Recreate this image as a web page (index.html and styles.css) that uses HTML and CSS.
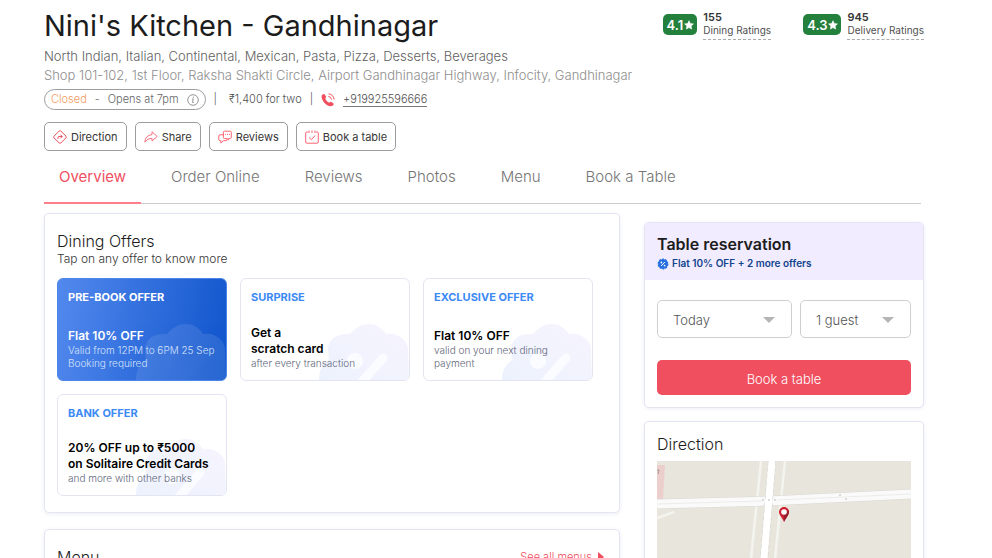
FILE: index.html
```html
<!DOCTYPE html>
<html lang="en">
<head>
<meta charset="utf-8">
<meta name="viewport" content="width=device-width, initial-scale=1">
<title>Nini's Kitchen - Gandhinagar</title>
<link rel="stylesheet" href="styles.css">
</head>
<body>
<svg class="defs" width="0" height="0" aria-hidden="true">
  <defs>
    <linearGradient id="pale" x1="0" y1="1" x2="1" y2="0">
      <stop offset="0" stop-color="#ecf2fd"/><stop offset="1" stop-color="#f7f4fe"/>
    </linearGradient>
    <symbol id="badge" viewBox="0 0 90 56">
      <path class="badge-shape" d="M0 56C0 48 2 42 10 36C9 33 10 30 9 25C10 14 18 9 31 10C37 3 43 0 50 0C57 0 62 3 67 10C79 8 88 16 89 24L90 56Z"/>
      <circle class="badge-mark" cx="36" cy="37" r="8"/>
      <path class="badge-line" d="M41 60L64 34"/>
    </symbol>
    <symbol id="star" viewBox="0 0 10 10"><path fill="#fff" stroke="#fff" stroke-width=".6" stroke-linejoin="round" d="M5 .7L6.3 3.5L9.4 3.9L7.1 6L7.7 9.1L5 7.6L2.3 9.1L2.9 6L.6 3.9L3.7 3.5Z"/></symbol>
  </defs>
</svg>
<div class="page">
  <header class="header">
    <div class="info">
      <h1>Nini's Kitchen - Gandhinagar</h1>
      <p class="cuisines">North Indian, Italian, Continental, Mexican, Pasta, Pizza, Desserts, Beverages</p>
      <p class="address">Shop 101-102, 1st Floor, Raksha Shakti Circle, Airport Gandhinagar Highway, Infocity, Gandhinagar</p>
    </div>
    <div class="ratings">
      <div class="rating">
        <span class="score">4.1<svg width="10" height="10"><use href="#star"/></svg></span>
        <div class="rating-text"><b>155</b><span>Dining Ratings</span></div>
      </div>
      <div class="rating">
        <span class="score">4.3<svg width="10" height="10"><use href="#star"/></svg></span>
        <div class="rating-text"><b>945</b><span>Delivery Ratings</span></div>
      </div>
    </div>
  </header>
  <div class="status-row">
    <span class="status"><span class="closed">Closed</span><span>-</span><span>Opens at 7pm</span>
      <svg width="12" height="12" viewBox="0 0 12 12" fill="none" stroke="#888"><circle cx="6" cy="6" r="5.3" stroke-width=".9"/><path d="M5.2 5.2L6.3 4.9L5.5 8.4Q5.5 8.9 6.8 8.3" stroke-width=".9"/><path d="M6.3 2.8V3.7" stroke-width="1.1"/></svg>
    </span>
    <span>|</span><span class="cost">₹1,400 for two</span><span>|</span>
    <svg class="phone" width="14" height="14" viewBox="0 0 14 14"><path fill="#ef4f5f" d="M1.3 1.8Q2.9.3 3.8 1.6L5 3.6Q5.4 4.5 4.4 5.2Q4.1 6.2 5.8 8Q7.6 9.9 8.7 9.5Q9.4 8.5 10.4 9L12.3 10.3Q13.3 11.2 11.8 12.5C9.5 14.5 5.7 12.3 3.5 9.9C1.2 7.4-.4 3.5 1.3 1.8Z"/><path fill="none" stroke="#ef4f5f" d="M7.3 3.3Q10.1 3.7 10.6 6.6M7.6.8Q12.5 1.5 13.1 6.5"/></svg>
    <a class="tel" href="tel:+919925596666">+919925596666</a>
  </div>
  <div class="actions">
    <button type="button"><svg width="14" height="14" viewBox="0 0 14 14" fill="none" stroke="#ef4f5f" stroke-linejoin="round"><path d="M6.2 1Q7 .3 7.8 1L13 6.2Q13.7 7 13 7.8L7.8 13Q7 13.7 6.2 13L1 7.8Q.3 7 1 6.2Z"/><path d="M5 9V7.5Q5 6.5 6 6.5H9M7.5 4.7L9.3 6.5L7.5 8.3"/></svg>Direction</button>
    <button type="button"><svg width="14" height="14" viewBox="0 0 14 14" fill="none" stroke="#f4717f" stroke-linejoin="round"><path d="M8 1.8L13.2 6.5L8 11V8.3Q3.5 8 .9 12.2Q1 5.5 8 4.6Z"/></svg>Share</button>
    <button type="button"><svg width="14" height="14" viewBox="0 0 14 14" fill="none" stroke="#ff6474" stroke-linejoin="round"><path d="M6.4 1.2H12.2Q13.3 1.2 13.3 2.2V7.5Q13.3 8.5 12.2 8.5H10.5V10L8.8 8.5H6.4Q5.4 8.5 5.4 7.5V2.2Q5.4 1.2 6.4 1.2Z"/><path d="M5.4 4.8H2Q.8 4.8.8 6V9.6Q.8 10.7 2 10.7H2.8V13L5.2 10.7H8Q9 10.7 9 9.5V8.5M7 4.4H8M9 4.4H10M11 4.4H12"/></svg>Reviews</button>
    <button type="button"><svg width="14" height="14" viewBox="0 0 14 14" fill="none" stroke="#ff6474" stroke-linejoin="round"><path d="M3 2H1.7Q.7 2 .7 3V12Q.7 13.2 1.8 13.2H12.2Q13.3 13.2 13.3 12V3Q13.3 2 12.3 2H11M4 .5V3M7 .5V3M10 .5V3M4 7.5L6.4 9.7L10.2 5.4"/></svg>Book a table</button>
  </div>
  <nav class="tabs">
    <a class="active" href="#overview">Overview</a><a href="#order">Order Online</a><a href="#reviews">Reviews</a><a href="#photos">Photos</a><a href="#menu">Menu</a><a href="#book">Book a Table</a>
  </nav>
  <div class="columns">
    <main class="main">
      <section class="card offers" id="overview">
        <h2>Dining Offers</h2>
        <p class="hint">Tap on any offer to know more</p>
        <div class="offer-grid">
          <article class="offer prebook"><svg class="mark"><use href="#badge"/></svg><h3>PRE-BOOK OFFER</h3><div class="body"><strong>Flat 10% OFF</strong><p>Valid from 12PM to 6PM 25 Sep<br>Booking required</p></div></article>
          <article class="offer"><svg class="mark"><use href="#badge"/></svg><h3>SURPRISE</h3><div class="body"><strong>Get a<br>scratch card</strong><p>after every transaction</p></div></article>
          <article class="offer"><svg class="mark"><use href="#badge"/></svg><h3>EXCLUSIVE OFFER</h3><div class="body"><strong>Flat 10% OFF</strong><p>valid on your next dining<br>payment</p></div></article>
          <article class="offer"><svg class="mark"><use href="#badge"/></svg><h3>BANK OFFER</h3><div class="body"><strong>20% OFF up to ₹5000<br>on Solitaire Credit Cards</strong><p>and more with other banks</p></div></article>
        </div>
      </section>
      <section class="card menu" id="menu">
        <h2>Menu</h2>
        <a href="#menus">See all menus <svg width="6" height="10" viewBox="0 0 6 10"><path fill="#ef4f5f" d="M0 0L6 5L0 10Z"/></svg></a>
      </section>
    </main>
    <aside class="side">
      <form class="card reserve" id="book">
        <div class="reserve-head">
          <h2>Table reservation</h2>
          <p><svg width="12" height="12" viewBox="0 0 12 12"><circle cx="6" cy="6" r="4.8" fill="#256fe0" stroke="#256fe0" stroke-width="1.2" stroke-dasharray="2 1"/><path d="M4.1 8L7.9 4" stroke="#fff"/><circle cx="4.4" cy="4.5" r=".9" fill="#fff"/><circle cx="7.6" cy="7.6" r=".9" fill="#fff"/></svg>Flat 10% OFF + 2 more offers</p>
        </div>
        <div class="reserve-body">
          <div class="fields">
            <div class="field"><select aria-label="Date"><option>Today</option><option>Tomorrow</option></select></div>
            <div class="field"><select aria-label="Guests"><option>1 guest</option><option>2 guests</option></select></div>
          </div>
          <button class="book" type="button">Book a table</button>
        </div>
      </form>
      <section class="card direction">
        <h2>Direction</h2>
        <svg class="map" viewBox="0 0 254 150" preserveAspectRatio="xMidYMin slice" role="img" aria-label="Map">
          <rect width="254" height="150" fill="#e8e5dd"/>
          <path fill="#eccfcd" d="M0 4H8L6 38H0Z"/><path d="M0 9L2 9L1 13" fill="none" stroke="#927e7c" stroke-width=".7"/>
          <path fill="none" stroke="#f4f4ef" stroke-width="2.5" d="M104 0L94 98L88 150M128 0L118 98L112 150M0 57L17 51"/>
          <path fill="none" stroke="#dad8d3" stroke-width="10" d="M0 43L112 40L254 33"/>
          <path fill="none" stroke="#fafafa" stroke-width="9" d="M0 43L112 40L254 33"/>
          <path fill="none" stroke="#d1d0cc" stroke-width="8" stroke-dasharray="4 3" d="M115 0L107 98L103 150"/>
          <path fill="none" stroke="#fff" stroke-width="7" d="M115 0L107 98L103 150"/>
          <path fill="none" stroke="#ececea" d="M0 43L105 40M120 39L254 33"/>
          <path fill="none" stroke="#bbb" stroke-width="1" stroke-dasharray="2 4" d="M105 39H121M182 34H185M188 38H191"/>
          <path fill="#cc1f32" d="M127 61C125 56 122 54 122 51A5 5 0 0 1 132 51C132 54 129 56 127 61Z"/><path fill="#981d2c" d="M127 61V53L132 49C132 55 129 57 127 61Z"/><circle cx="127" cy="51" r="2.8" fill="#fff"/>
        </svg>
      </section>
    </aside>
  </div>
</div>
</body>
</html>
```
FILE: styles.css
```css
* { box-sizing: border-box; }
body { margin: 0; height: 100vh; overflow: hidden; background: #fff; color: #1c1c1c; font-family: Inter, "Open Sans", sans-serif; font-size: 12px; }
h1, h2, h3, p { margin: 0; font-weight: 400; }
button, select { font: inherit; }
svg { display: block; flex: none; }
a { text-decoration: none; color: inherit; }
.defs { position: absolute; }
.page { padding: 8px 68px 0 44px; }

.header { position: relative; }
h1 { font-size: 29px; line-height: 36px; }
.cuisines, .address { font-size: 13px; line-height: 18px; font-weight: 300; white-space: nowrap; margin-top: 3px; color: #5f5f5f; }
.address { margin-top: 1px; color: #8e8e8e; }
.ratings { position: absolute; top: 3px; right: 0; display: flex; gap: 32px; }
.rating { display: flex; gap: 6px; align-items: flex-start; }
.score { display: flex; align-items: center; gap: 1px; height: 21px; margin-top: 3px; padding: 0 3px 0 4px; border-radius: 5px; background: #24803d; color: #fff; font-size: 13px; font-weight: 600; }
.rating-text { display: flex; flex-direction: column; font-size: 10px; line-height: 13px; color: #4f4f4f; border-bottom: 1px dashed #aaa; height: 29px; white-space: nowrap; }
.rating-text b { font-size: 11px; line-height: 13px; font-weight: 600; color: #363636; }

.status-row { display: flex; align-items: center; margin-top: 5px; gap: 8px; font-size: 11px; font-weight: 300; color: #4f4f4f; line-height: 19px; }
.status { display: flex; align-items: center; gap: 8px; height: 21px; padding: 0 6px; border: 1px solid #9c9c9c; border-radius: 11px; color: #666; }
.closed { color: #f29b62; }
.cost { margin-left: 4px; }
.tel { border-bottom: 1px solid #777; line-height: 13px; color: #4f4f4f; }

.actions { display: flex; gap: 8px; margin-top: 12px; }
.actions button { display: flex; align-items: center; gap: 4px; height: 29px; padding: 0 8px; border: 1px solid #9c9c9c; border-radius: 5px; background: #fff; color: #363636; font-size: 11px; }

.tabs { display: flex; gap: 15px; height: 53px; margin-right: 3px; border-bottom: 1px solid #ccc; font-size: 15px; color: #757575; font-weight: 300; }
.tabs a { padding: 17px 15px 0; line-height: 18px; height: 53px; }
.tabs .active { color: #ef4f5f; font-weight: 400; border-bottom: 2px solid #ff7e8b; }

.columns { display: grid; grid-template-columns: minmax(0, 1fr) 280px; gap: 24px; align-items: start; padding-top: 9px; }
.card { background: #fff; border: 1px solid #e3e5f3; border-radius: 5px; box-shadow: 0 1px 4px #edeef5; }
h2 { font-size: 16px; line-height: 20px; font-weight: 300; }
.main { display: grid; gap: 16px; }
.offers { padding: 17px 12px 16px; }
.hint { font-size: 12px; line-height: 15px; font-weight: 300; color: #363636; }
.offer-grid { display: grid; grid-template-columns: repeat(auto-fill, 170px); gap: 13px; margin-top: 12px; }
.offer { position: relative; overflow: hidden; display: flex; flex-direction: column; justify-content: space-between; min-height: 103px; padding: 11px 10px 10px; border: 1px solid #e3e5f3; border-radius: 6px; white-space: nowrap; }
.offer + .offer:last-child { min-height: 102px; }
h3 { position: relative; font-size: 11px; line-height: 14px; font-weight: 700; color: #3c8af5; }
.body { position: relative; }
.body strong { display: block; font-size: 12px; line-height: 16px; font-weight: 600; color: #000; }
.body p { font-size: 10px; line-height: 13px; font-weight: 300; color: #62677b; }
.mark { position: absolute; right: 0; bottom: 0; width: 90px; height: 56px; }
.badge-shape { fill: url(#pale); }
.badge-mark { fill: #fafcff; }
.badge-line { fill: none; stroke: #fafcff; stroke-width: 9; stroke-linecap: round; }
.prebook { background: linear-gradient(100deg, #5389ee, #1055cc); border-color: #4c86e8; }
.prebook .badge-shape { fill: #fff; }
.prebook .badge-mark { fill: #083a9c; }
.prebook .badge-line { stroke: #083a9c; }
.prebook .mark { opacity: .1; }
.prebook h3, .prebook strong { color: #fff; }
.prebook .body p { color: #d3e1fb; }
.menu { display: flex; justify-content: space-between; align-items: flex-start; padding: 17px 12px 24px; }
.menu a { display: flex; align-items: center; gap: 6px; font-size: 11px; line-height: 20px; color: #ef4f5f; font-weight: 300; padding-right: 3px; }

.side { display: grid; gap: 13px; padding-top: 9px; }
.reserve { overflow: hidden; }
.reserve-head { padding: 11px 12px 9px; background: #f1ecff; }
.reserve-head h2 { font-weight: 600; }
.reserve-head p { display: flex; align-items: center; gap: 3px; margin-top: 2px; font-size: 10px; line-height: 15px; font-weight: 600; color: #11448b; }
.reserve-body { padding: 20px 12px 12px; }
.fields { display: grid; grid-template-columns: 135fr 111fr; gap: 8px; }
.field { position: relative; }
.field select { appearance: none; display: block; width: 100%; height: 38px; padding: 2px 15px 0; border: 1px solid #cfcfcf; border-radius: 5px; background: #fff; color: #555; font-size: 13px; font-weight: 300; }
.field::after { content: ""; position: absolute; right: 17px; top: 17px; border: 6px solid transparent; border-top-color: #b5b5b5; border-bottom: 0; pointer-events: none; }
.book { width: 100%; height: 35px; margin-top: 22px; padding: 2px 0 0; border: 0; border-radius: 5px; background: #ef4f5f; color: #fff; font-size: 13px; font-weight: 300; }
.direction { padding: 12px 12px 16px; }
.map { width: 100%; height: 150px; margin-top: 7px; }
```
